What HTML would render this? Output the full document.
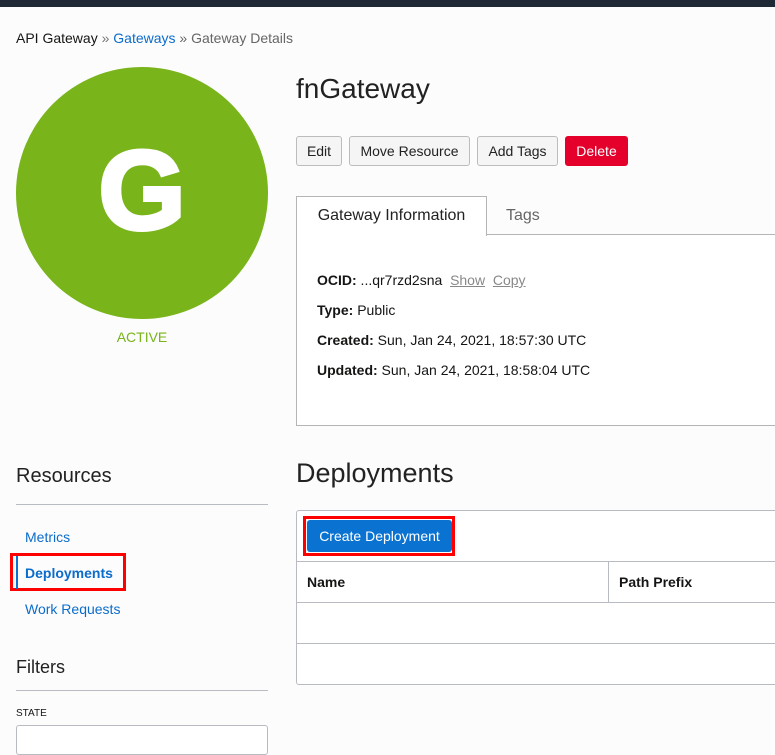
<!DOCTYPE html>
<html><head><meta charset="utf-8"><style>
*{margin:0;padding:0;box-sizing:border-box}
body{width:775px;height:738px;overflow:hidden;background:#fcfcfc;font-family:"Liberation Sans",Arial,sans-serif;color:#161513;position:relative}
.a{position:absolute;white-space:nowrap}
.btn{position:absolute;top:136px;height:30px;border:1px solid #bcbcbc;border-radius:3px;background:#f5f5f5;font-size:14px;line-height:28px;text-align:center;color:#222}
.lnk{color:#0b6ccb}
</style></head><body>
<div class="a" style="left:0;top:0;width:775px;height:7px;background:#1f2835"></div>
<div class="a" style="left:16px;top:30px;font-size:14px;line-height:17px"><span>API Gateway</span> <span style="color:#777">»</span> <span class="lnk">Gateways</span> <span style="color:#666">» Gateway Details</span></div>

<div class="a" style="left:16px;top:67px;width:252px;height:252px;border-radius:50%;background:#78b41a"></div>
<div class="a" style="left:16px;top:126px;width:252px;text-align:center;color:#fff;font-weight:900;font-size:112px;line-height:130px;-webkit-text-stroke:4px #fff">G</div>
<div class="a" style="left:16px;top:329px;width:252px;text-align:center;color:#78b41a;font-size:14px;line-height:16px">ACTIVE</div>

<div class="a" style="left:296px;top:72px;font-size:28px;line-height:34px;color:#222">fnGateway</div>
<div class="btn" style="left:296px;width:46px">Edit</div>
<div class="btn" style="left:349px;width:121px">Move Resource</div>
<div class="btn" style="left:477px;width:81px">Add Tags</div>
<div class="btn" style="left:565px;width:63px;background:#e4002b;border-color:#e4002b;color:#fff">Delete</div>

<div class="a" style="left:296px;top:234px;width:490px;height:192px;border:1px solid #b5b5b5;background:#fff"></div>
<div class="a" style="left:296px;top:196px;width:191px;height:40px;border:1px solid #b5b5b5;border-bottom:none;background:#fff;font-size:16px;line-height:38px;text-align:center;color:#222">Gateway Information</div>
<div class="a" style="left:506px;top:206px;font-size:16px;line-height:20px;color:#666">Tags</div>
<div class="a" style="left:317px;top:272px;font-size:14px;line-height:17px"><b>OCID:</b> ...qr7rzd2sna &nbsp;<span style="color:#888;text-decoration:underline">Show</span> &nbsp;<span style="color:#888;text-decoration:underline">Copy</span></div>
<div class="a" style="left:317px;top:302px;font-size:14px;line-height:17px"><b>Type:</b> Public</div>
<div class="a" style="left:317px;top:332px;font-size:14px;line-height:17px"><b>Created:</b> Sun, Jan 24, 2021, 18:57:30 UTC</div>
<div class="a" style="left:317px;top:362px;font-size:14px;line-height:17px"><b>Updated:</b> Sun, Jan 24, 2021, 18:58:04 UTC</div>

<div class="a" style="left:296px;top:457px;font-size:27px;line-height:33px;color:#222">Deployments</div>
<div class="a" style="left:296px;top:510px;width:490px;height:175px;border:1px solid #b8bcc2;border-radius:3px;background:#fff"></div>
<div class="a" style="left:303px;top:516px;width:152px;height:40px;border:3px solid #f00"></div>
<div class="a" style="left:307px;top:520px;width:145px;height:32px;border-radius:3px;background:#0a72d0;color:#fff;font-size:14px;line-height:32px;text-align:center">Create Deployment</div>
<div class="a" style="left:297px;top:561px;width:480px;height:1px;background:#b8bcc2"></div>
<div class="a" style="left:297px;top:602px;width:480px;height:1px;background:#b8bcc2"></div>
<div class="a" style="left:297px;top:643px;width:480px;height:1px;background:#b8bcc2"></div>
<div class="a" style="left:608px;top:562px;width:1px;height:40px;background:#b8bcc2"></div>
<div class="a" style="left:307px;top:574px;font-size:14px;font-weight:bold;line-height:17px">Name</div>
<div class="a" style="left:619px;top:574px;font-size:14px;font-weight:bold;line-height:17px">Path Prefix</div>

<div class="a" style="left:16px;top:464px;font-size:20px;line-height:24px;color:#222">Resources</div>
<div class="a" style="left:16px;top:504px;width:252px;height:1px;background:#b8bcc2"></div>
<div class="a lnk" style="left:25px;top:529px;font-size:14px;line-height:17px">Metrics</div>
<div class="a" style="left:10px;top:553px;width:116px;height:38px;border:3px solid #f00"></div>
<div class="a" style="left:16px;top:556px;width:2px;height:33px;background:#0a72d0"></div>
<div class="a lnk" style="left:25px;top:565px;font-size:14px;font-weight:bold;line-height:17px">Deployments</div>
<div class="a lnk" style="left:25px;top:601px;font-size:14px;line-height:17px">Work Requests</div>
<div class="a" style="left:16px;top:656px;font-size:18px;line-height:22px;color:#222">Filters</div>
<div class="a" style="left:16px;top:690px;width:252px;height:1px;background:#b8bcc2"></div>
<div class="a" style="left:16px;top:708px;font-size:10px;line-height:12px">STATE</div>
<div class="a" style="left:16px;top:725px;width:252px;height:30px;border:1px solid #b8bcc2;border-radius:3px;background:#fff"></div>
</body></html>
